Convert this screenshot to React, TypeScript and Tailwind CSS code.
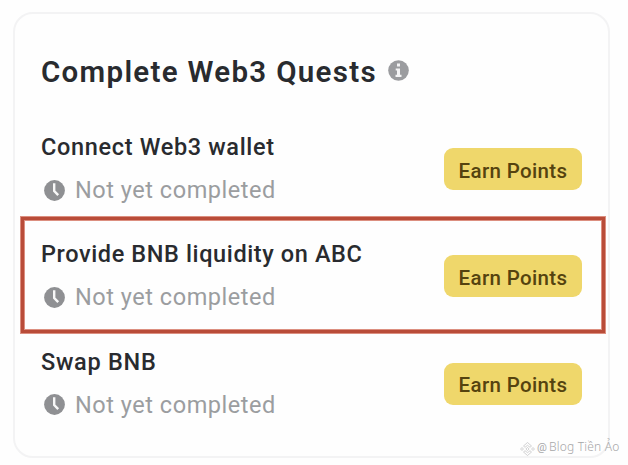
import React from "react";

type Quest = { title: string; spacing: string; highlighted?: boolean };

const quests: Quest[] = [
  { title: "Connect Web3 wallet", spacing: "tracking-[0.66px]" },
  { title: "Provide BNB liquidity on ABC", spacing: "tracking-[0.61px]", highlighted: true },
  { title: "Swap BNB", spacing: "tracking-[0.72px]" },
];

function InfoIcon() {
  return (
    <svg className="-mt-[3px] ml-[11px] h-[21px] w-[21px]" viewBox="0 0 21 21">
      <circle cx="10.5" cy="10.5" r="10.3" fill="#9b9c9f" />
      <path d="M9 3.4h3v3H9zM7.7 8.4H12v6.4h1.5v2.2H7.5v-2.2H9v-4.2H7.7z" fill="#f4f4f5" />
    </svg>
  );
}

function ClockIcon() {
  return (
    <svg className="ml-[3px] h-[21px] w-[21px] shrink-0" viewBox="0 0 21 21">
      <circle cx="10.5" cy="10.5" r="10.4" fill="#8f9093" />
      <path d="M10.2 3.2v7.8l4 4.2" fill="none" stroke="#f8f8f8" strokeWidth="2.4" />
    </svg>
  );
}

function QuestRow({ title, spacing, highlighted }: Quest) {
  return (
    <li className="relative flex h-[107.25px] items-start justify-between pr-[27px] pl-[27px]">
      {highlighted && (
        <div className="pointer-events-none absolute top-px right-[3px] left-[6px] h-[118px] border border-[#dc8f80]">
          <div className="h-full border-[3px] border-[#b94c39]">
            <div className="h-full border border-[#dc8f80]" />
          </div>
        </div>
      )}
      <div className="pt-[23px]">
        <h2 className={`h-[32px] text-[23.5px] leading-[32px] font-medium whitespace-nowrap text-[#292b2f] ${spacing}`}>
          {title}
        </h2>
        <div className="mt-[11px] flex h-[32px] items-center">
          <ClockIcon />
          <span className="ml-[10px] text-[23.5px] leading-[32px] tracking-[0.53px] whitespace-nowrap text-[#9b9da0]">
            Not yet completed
          </span>
        </div>
      </div>
      <button className="mt-[40px] flex h-[42px] w-[138px] items-center justify-center rounded-[9px] bg-[#efd76b] pt-[4px] text-[20.5px] font-medium tracking-[0.35px] whitespace-nowrap text-[#55430f]">
        Earn Points
      </button>
    </li>
  );
}

export default function App() {
  return (
    <main className="relative h-[465px] w-[628px] overflow-hidden bg-[#fefefe] pt-[12px] pl-[13px] font-['Roboto','Noto_Sans',sans-serif]">
      <section className="h-[446px] w-[597px] rounded-[20px] border-2 border-[#f3f3f4] bg-[#fefefe]">
        <header className="-mx-[2px] flex h-[94px] items-center pt-[22px] pl-[28px]">
          <h1 className="text-[29.5px] leading-[40px] font-semibold tracking-[1.3px] whitespace-nowrap text-[#292b2f]">
            Complete Web3 Quests
          </h1>
          <InfoIcon />
        </header>
        <ul className="-mx-[1px]">
          {quests.map((quest) => (
            <QuestRow key={quest.title} {...quest} />
          ))}
        </ul>
      </section>
      <div className="absolute top-[438px] left-[520px] flex h-[18px] items-center whitespace-nowrap text-[#a6a6a8]">
        <svg className="mt-[4px] h-[14px] w-[15px]" viewBox="0 0 15 14" fill="none" stroke="#c5c5c7" strokeWidth="0.8">
          <path d="m3.5 4 4-3.5 4 3.5-1.5 1.3-2.5-2-2.5 2zM3.5 10l4 3.5 4-3.5L10 8.7l-2.5 2-2.5-2zM.5 7 2 5.6 3.5 7 2 8.4zM11.5 7 13 5.6 14.5 7 13 8.4zM7.5 5.4 9.1 7 7.5 8.6 5.9 7z" />
        </svg>
        <span className="mt-[2px] ml-[2px] text-[11px] leading-[18px]">@</span>
        <span className="ml-[2px] font-['Noto_Sans',sans-serif] text-[12px] leading-[18px] font-light tracking-[0.2px]">
          Blog Tiền Ảo
        </span>
      </div>
    </main>
  );
}
